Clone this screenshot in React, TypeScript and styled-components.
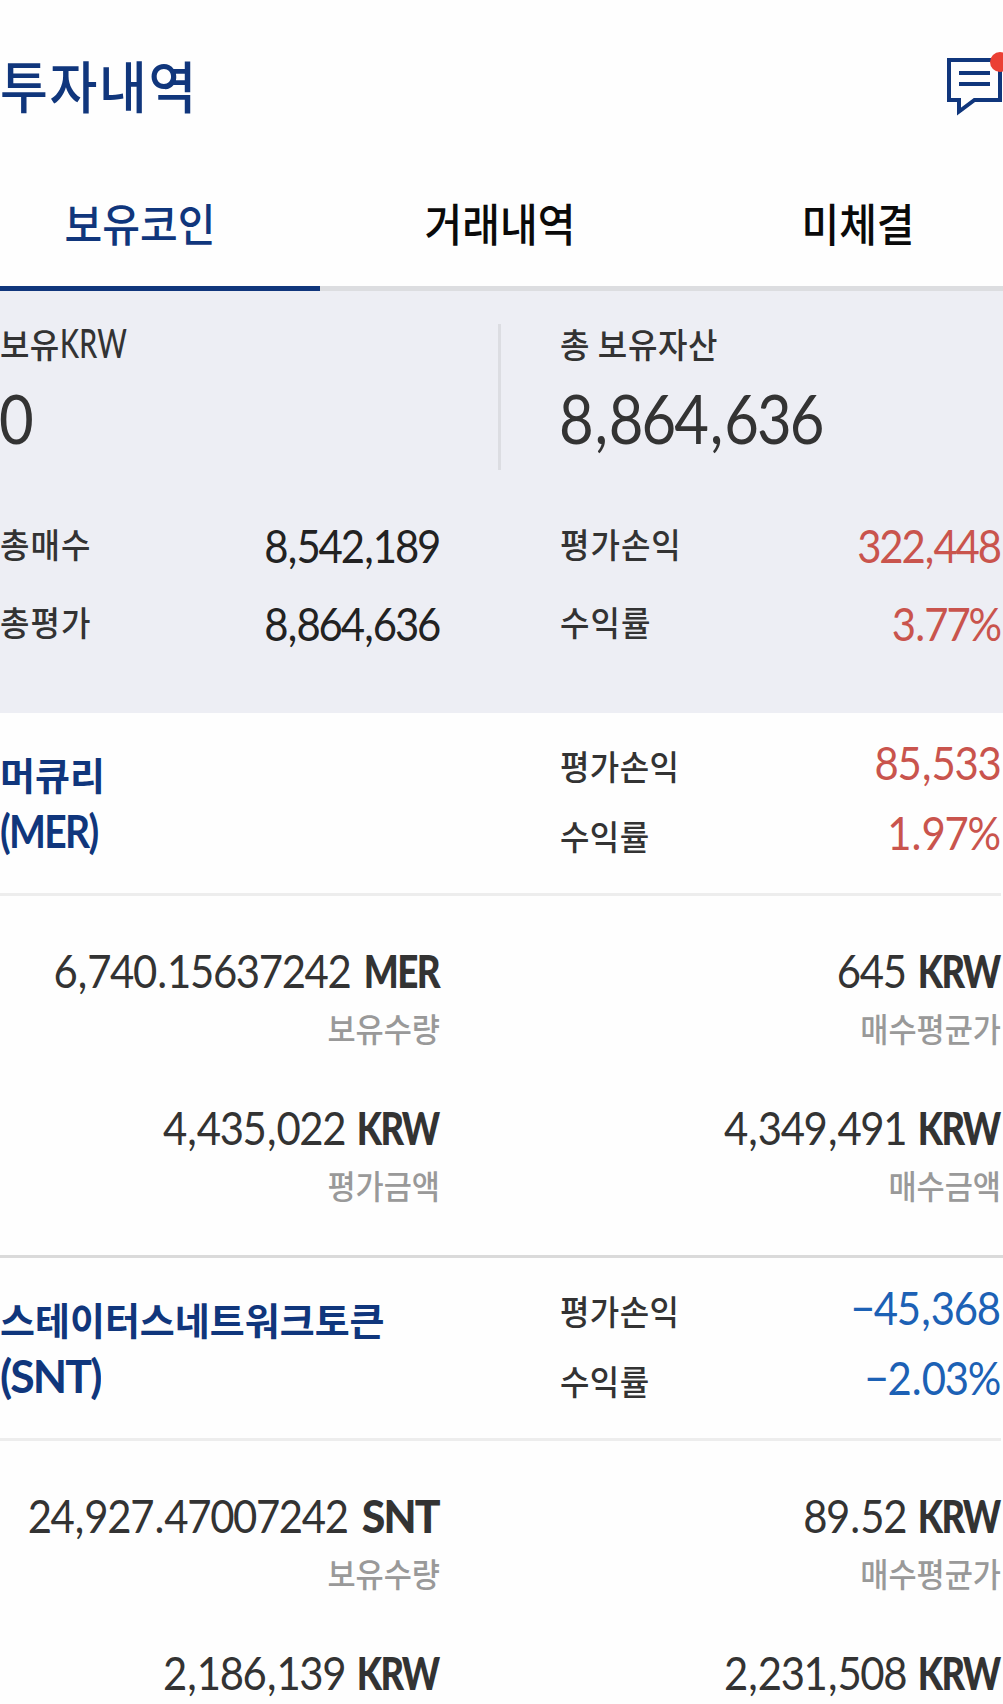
import React from "react";
import styled, { createGlobalStyle } from "styled-components";

const NAVY = "#10367c";
const RED = "#c9544d";
const BLUE = "#1c61b5";
const INK = "#333333";

const GlobalStyle = createGlobalStyle`
  * { box-sizing: border-box; }
  html, body { margin: 0; padding: 0; background: #fefefe; }
  body { overflow: hidden; }
`;

const Screen = styled.main`
  width: 1003px;
  height: 1704px;
  overflow: hidden;
  background: #fefefe;
  color: ${INK};
  font-family: Lato, "Noto Sans CJK KR", sans-serif;
  white-space: nowrap;
`;

const Header = styled.header`
  display: flex;
  justify-content: space-between;
  height: 166px;
  padding-top: 49px;
`;

const Title = styled.h1`
  margin: 0;
  color: ${NAVY};
  font-size: 52px;
  font-weight: 500;
  line-height: 74px;
  letter-spacing: 1.7px;
  font-family: "Noto Sans CJK KR", sans-serif;
  transform: scaleY(1.08);
`;

const NoticeIcon = styled.svg`
  display: block;
  width: 56px;
  height: 68px;
`;

const Tabs = styled.nav`
  display: grid;
  grid-template-columns: 320px 360px 323px;
  height: 125px;
`;

const Tab = styled.div<{ $active?: boolean }>`
  padding-top: 18px;
  text-align: center;
  color: ${(p) => (p.$active ? NAVY : "#0a0a0a")};
  border-bottom: 5px solid ${(p) => (p.$active ? NAVY : "#dcdde0")};
  font: 500 41px/76px "Noto Sans CJK KR", sans-serif;
  &:nth-child(1) { padding-right: 40px; }
  &:nth-child(3) { padding-left: 33px; }
`;

const TabText = styled.span`
  display: block;
  transform: scaleY(1.1);
`;

const Summary = styled.section`
  height: 422px;
  background: #edeef4;
  padding: 32px 2px 0 0;
`;

const Balances = styled.div`
  display: grid;
  grid-template-columns: 498px 1fr;
  height: 147px;
`;

const Balance = styled.div<{ $divided?: boolean }>`
  margin-top: 1px;
  ${(p) => p.$divided && "border-left: 3px solid #dcdde2; padding-left: 59px;"}
`;

const Label = styled.div<{ $spacing?: number }>`
  font: 500 32px/42px "Noto Sans CJK KR", sans-serif;
  letter-spacing: ${(p) => p.$spacing ?? 0.4}px;
  padding-bottom: 4px;
  transform: scaleY(1.07);
`;

const BalanceLabel = styled(Label)`
  line-height: 39px;
  padding-bottom: 7px;
`;

const Ticker = styled.span`
  display: inline-block;
  font-family: Lato, sans-serif;
  font-size: 37px;
  line-height: 36px;
  transform: scaleX(0.77);
  transform-origin: left;
`;

const BigNumber = styled.div`
  font-size: 68px;
  line-height: 82px;
  margin: 7px 0 0 -1px;
  letter-spacing: -2.2px;
  transform: scaleX(0.88);
  transform-origin: left;
`;

const Totals = styled.div`
  display: grid;
  grid-template-columns: 440px 441px;
  column-gap: 120px;
  row-gap: 18px;
  margin-top: 45px;
`;

const Pair = styled.div<{ $low?: boolean }>`
  display: flex;
  justify-content: space-between;
  align-items: center;
  height: 60px;
  ${(p) => p.$low && `${Label} { padding-bottom: 1px; }`}
`;

const Amount = styled.span<{ $tone?: string; $total?: boolean }>`
  color: ${(p) => p.$tone ?? "#222222"};
  font-size: 46px;
  line-height: 60px;
  letter-spacing: ${(p) => (p.$total ? -2.4 : -1.4)}px;
  padding: ${(p) => (p.$total ? "2px 1px 0 0" : "0 1px 4px 0")};
  transform: scaleX(0.91);
  transform-origin: right;
`;

const Separator = styled.span<{ $gap: number }>`
  margin: 0 ${(p) => p.$gap / 2}em;
`;

const Coin = styled.article`
  height: 545px;
  border-bottom: 3px solid #dadada;
`;

const CoinHead = styled.div`
  display: grid;
  grid-template-columns: 440px 441px;
  column-gap: 120px;
  width: 1001px;
  height: 183px;
  border-bottom: 3px solid #ededed;
`;

const CoinName = styled.h2`
  margin: 0;
  padding-top: 33px;
  color: ${NAVY};
  font: 700 38px/56px "Noto Sans CJK KR", sans-serif;
`;

const CoinSymbol = styled.div<{ $stretch: number }>`
  font: 700 46px/58px Lato, sans-serif;
  letter-spacing: -2px;
  transform: scaleX(${(p) => p.$stretch});
  transform-origin: left;
`;

const Returns = styled.div`
  display: grid;
  grid-auto-rows: 60px;
  row-gap: 10px;
  padding-top: 22px;
`;

const Metrics = styled.div`
  display: grid;
  grid-template-columns: 440px 441px;
  column-gap: 120px;
  grid-auto-rows: 157px;
  padding-top: 45px;
`;

const Metric = styled.div`
  display: flex;
  flex-direction: column;
  align-items: flex-end;
`;

const MetricValue = styled.div`
  display: flex;
  justify-content: flex-end;
  height: 60px;
  font-size: 46px;
  line-height: 60px;
`;

const Quantity = styled.span`
  letter-spacing: -1.5px;
  transform: scaleX(0.91);
  transform-origin: right;
`;

const UnitBox = styled.span<{ $width: number }>`
  display: flex;
  justify-content: flex-end;
  width: ${(p) => p.$width}px;
  padding-right: 1px;
`;

const Unit = styled.b<{ $stretch: number }>`
  font-weight: 900;
  letter-spacing: -2px;
  transform: scaleX(${(p) => p.$stretch});
  transform-origin: right;
`;

const Caption = styled.div`
  color: #999999;
  font: 500 30.6px/44px "Noto Sans CJK KR", sans-serif;
  margin-top: 5px;
  transform: scaleY(1.06);
`;

interface Holding {
  name: string;
  symbol: string;
  nameStretch: number;
  profit: string;
  rate: string;
  tone: string;
  metrics: { value: string; unit: string; caption: string }[];
}

const unitShape: Record<string, { width: number; stretch: number }> = {
  KRW: { width: 95, stretch: 0.79 },
  MER: { width: 90, stretch: 0.8 },
  SNT: { width: 92, stretch: 0.93 },
};

const holdings: Holding[] = [
  {
    name: "머큐리",
    symbol: "MER",
    nameStretch: 0.85,
    profit: "85,533",
    rate: "1.97%",
    tone: RED,
    metrics: [
      { value: "6,740.15637242", unit: "MER", caption: "보유수량" },
      { value: "645", unit: "KRW", caption: "매수평균가" },
      { value: "4,435,022", unit: "KRW", caption: "평가금액" },
      { value: "4,349,491", unit: "KRW", caption: "매수금액" },
    ],
  },
  {
    name: "스테이터스네트워크토큰",
    symbol: "SNT",
    nameStretch: 0.97,
    profit: "−45,368",
    rate: "−2.03%",
    tone: BLUE,
    metrics: [
      { value: "24,927.47007242", unit: "SNT", caption: "보유수량" },
      { value: "89.52", unit: "KRW", caption: "매수평균가" },
      { value: "2,186,139", unit: "KRW", caption: "평가금액" },
      { value: "2,231,508", unit: "KRW", caption: "매수금액" },
    ],
  },
];

function Digits({ value, gap = 0.065 }: { value: string; gap?: number }) {
  return (
    <>
      {value.split(/([,.])/).map((part, i) =>
        i % 2 ? <Separator key={i} $gap={gap}>{part}</Separator> : part,
      )}
    </>
  );
}

function Notice() {
  return (
    <NoticeIcon viewBox="0 0 56 68" fill="none">
      <path d="M2 11H53V51H27.500L12 62.500V51H2Z" stroke={NAVY} strokeWidth="4" />
      <path d="M12 24H43M12 35H43" stroke={NAVY} strokeWidth="4" />
      <circle cx="53" cy="13" r="10" fill="#eb4034" />
    </NoticeIcon>
  );
}

export default function App() {
  return (
    <Screen>
      <GlobalStyle />
      <Header>
        <Title>투자내역</Title>
        <Notice />
      </Header>
      <Tabs>
        <Tab $active><TabText>보유코인</TabText></Tab>
        <Tab><TabText>거래내역</TabText></Tab>
        <Tab><TabText>미체결</TabText></Tab>
      </Tabs>
      <Summary>
        <Balances>
          <Balance>
            <BalanceLabel>보유<Ticker>KRW</Ticker></BalanceLabel>
            <BigNumber>0</BigNumber>
          </Balance>
          <Balance $divided>
            <BalanceLabel $spacing={0.6}>총 보유자산</BalanceLabel>
            <BigNumber><Digits value="8,864,636" gap={0.09} /></BigNumber>
          </Balance>
        </Balances>
        <Totals>
          <Pair><Label $spacing={1}>총매수</Label><Amount $total><Digits value="8,542,189" /></Amount></Pair>
          <Pair><Label $spacing={1}>평가손익</Label><Amount $total $tone={RED}><Digits value="322,448" /></Amount></Pair>
          <Pair><Label $spacing={1}>총평가</Label><Amount $total><Digits value="8,864,636" /></Amount></Pair>
          <Pair><Label $spacing={1}>수익률</Label><Amount $total $tone={RED}><Digits value="3.77%" /></Amount></Pair>
        </Totals>
      </Summary>
      {holdings.map((h) => (
        <Coin key={h.symbol}>
          <CoinHead>
            <CoinName>
              {h.name}
              <CoinSymbol $stretch={h.nameStretch}>({h.symbol})</CoinSymbol>
            </CoinName>
            <Returns>
              <Pair $low><Label>평가손익</Label><Amount $tone={h.tone}><Digits value={h.profit} /></Amount></Pair>
              <Pair $low><Label>수익률</Label><Amount $tone={h.tone}><Digits value={h.rate} /></Amount></Pair>
            </Returns>
          </CoinHead>
          <Metrics>
            {h.metrics.map((m) => (
              <Metric key={m.caption}>
                <MetricValue>
                  <Quantity><Digits value={m.value} /></Quantity>
                  <UnitBox $width={unitShape[m.unit].width}>
                    <Unit $stretch={unitShape[m.unit].stretch}>{m.unit}</Unit>
                  </UnitBox>
                </MetricValue>
                <Caption>{m.caption}</Caption>
              </Metric>
            ))}
          </Metrics>
        </Coin>
      ))}
    </Screen>
  );
}
